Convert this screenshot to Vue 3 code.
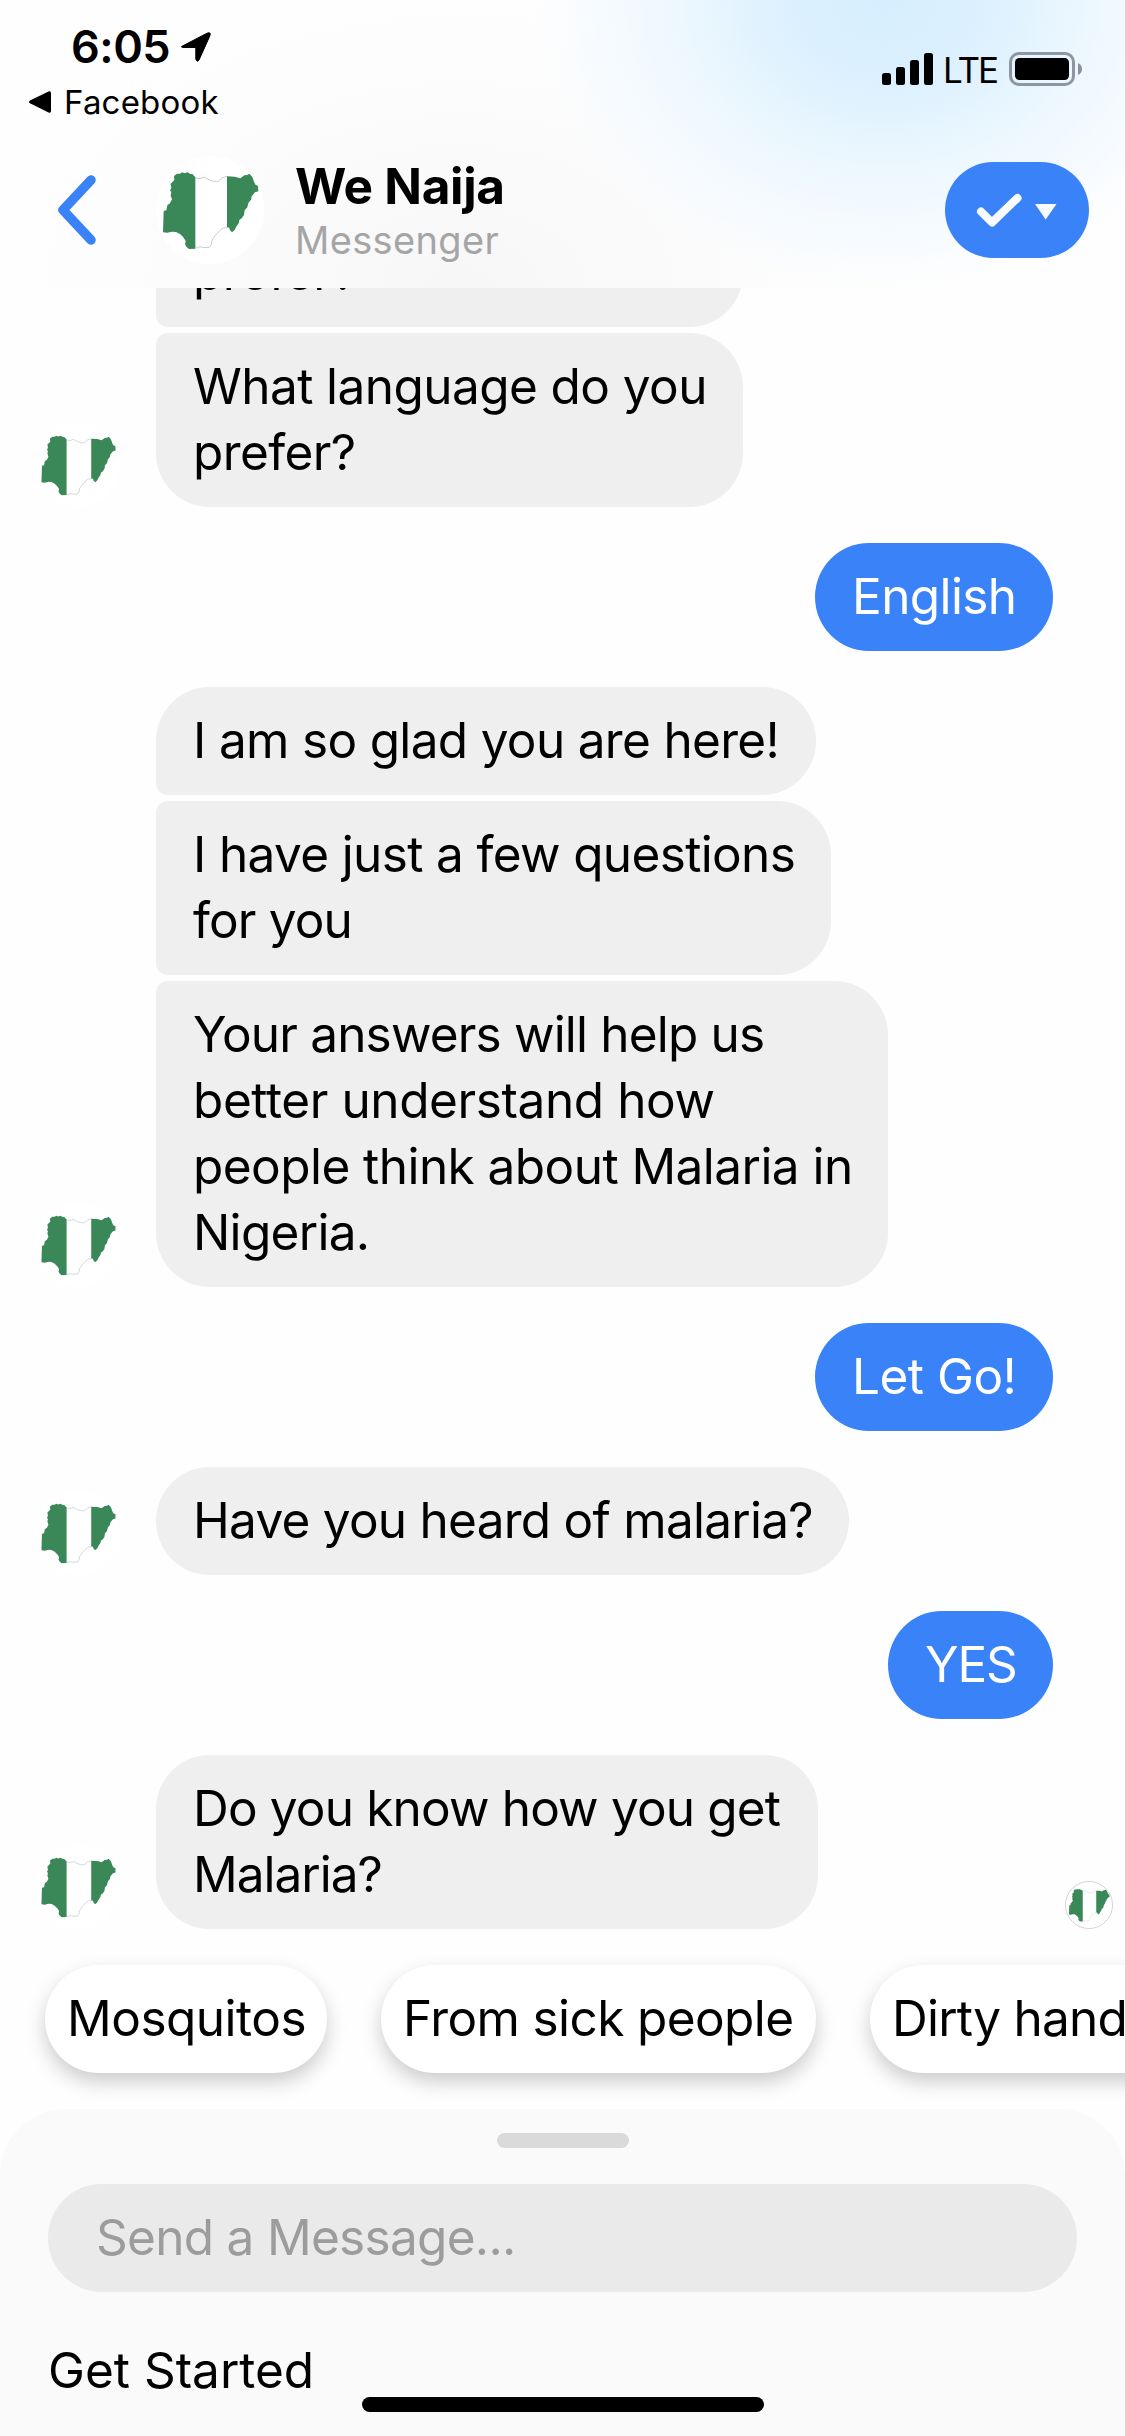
<script setup>
import { h } from 'vue'

const FlagMap = () =>
  h('svg', { viewBox: '48 48 324 324', width: '100%', height: '100%', style: 'display:block' }, [
    h('circle', { cx: 210, cy: 210, r: 162, fill: '#fff' }),
    h('path', {
      d: 'M166 112 Q175 120 192 111 Q208 122 220 124 L235 124 Q243 111 261 109 M166 319 L172 324 L180 320 L190 323 L208 322 Q217 314 216 301 Q226 282 240 272 L249 264 L261 263',
      fill: 'none', stroke: '#b9c6c1', 'stroke-width': 2.5
    }),
    h('path', {
      d: 'M166 326 L147 327 L139 320 L135 313 L137 303 L130 292 L120 282 L108 276 L96 275 L82 278 L69 277 L71 213 L79 211 L82 196 L90 190 L96 178 L92 167 L94 155 L90 152 L94 144 L92 131 L103 120 L102 108 L111 101 L120 101 L126 97 L134 100 L143 97 L151 102 L157 102 L166 112 Z M261 109 L284 110 L301 115 L313 106 L322 105 L328 101 L337 111 L342 125 L347 135 L354 137 L355 154 L345 157 L335 169 L333 179 L325 189 L322 202 L314 211 L312 225 L305 235 L298 240 L297 248 L288 261 L284 270 L276 277 L269 269 L268 263 L261 262 Z',
      fill: '#3a8758'
    })
  ])

const thread = [
  { from: 'bot', bubbles: [
    { lines: [['prefer?', -0.5]], width: 587, join: 'both' },
    { lines: [['What language do you', -0.57], ['prefer?', -0.6]], width: 587, join: 'top' }
  ] },
  { from: 'me', bubbles: [{ lines: [['English', -0.6]], width: 238 }] },
  { from: 'bot', bubbles: [
    { lines: [['I am so glad you are here!', -0.67]], width: 660, join: 'bottom' },
    { lines: [['I have just a few questions', -0.64], ['for you', -0.85]], width: 675, join: 'both' },
    { lines: [['Your answers will help us', -0.82], ['better understand how', -0.4], ['people think about Malaria in', -0.55], ['Nigeria.', -0.7]], width: 732, join: 'top' }
  ] },
  { from: 'me', bubbles: [{ lines: [['Let Go!', -0.5]], width: 238 }] },
  { from: 'bot', bubbles: [{ lines: [['Have you heard of malaria?', -0.74]], width: 693 }] },
  { from: 'me', bubbles: [{ lines: [['YES', -1.2]], width: 165 }] },
  { from: 'bot', seen: true, bubbles: [{ lines: [['Do you know how you get', -0.83], ['Malaria?', -1]], width: 662 }] }
]

const replies = [
  { label: 'Mosquitos', width: 282, track: -0.5 },
  { label: 'From sick people', width: 435, track: -0.6 },
  { label: 'Dirty hands', width: 330, track: -0.75 }
]
</script>

<template>
  <div class="screen">
    <header class="header">
      <div class="status">
        <div class="status-left">
          <div class="clock">
            <span class="time">6:05</span>
            <svg class="location" viewBox="0 0 30 30"><path d="M1.5 14 L26 1.2 Q30.5 -.5 28.8 4 L18 28 Q16 31 14.8 27 V15.500 H3 Q-1.500 15 1.500 14Z" stroke="#000" stroke-width="1" /></svg>
          </div>
          <div class="back-app">
            <svg class="tri" viewBox="0 0 22 22"><path d="M1 9.500 L20 .3 Q22 0 22 2 V20 Q22 22 20 21.700 L1 12.300 Q-1 11 1 9.500Z" /></svg>
            <span>Facebook</span>
          </div>
        </div>
        <div class="status-right">
          <svg class="signal" viewBox="0 0 51 32">
            <rect x="0" y="20" width="9" height="12" rx="2.500" />
            <rect x="14" y="14" width="9" height="18" rx="2.500" />
            <rect x="28" y="7" width="9" height="25" rx="2.500" />
            <rect x="42" y="0" width="9" height="32" rx="2.500" />
          </svg>
          <span class="lte">LTE</span>
          <svg class="battery" viewBox="0 0 73 34">
            <rect x="1.500" y="1.500" width="63" height="31" rx="8.500" fill="none" stroke="#8d96a2" stroke-width="3" />
            <rect x="6" y="6" width="54" height="22" rx="4.500" />
            <path d="M69 11 Q73 13 73 17 T69 23Z" fill="#8d8f9a" />
          </svg>
        </div>
      </div>
      <div class="nav">
        <svg class="chevron" viewBox="0 0 42 72"><path d="M36 6 L8 36 L36 66" /></svg>
        <div class="avatar-lg"><FlagMap /></div>
        <div class="title">
          <div class="name">We Naija</div>
          <div class="sub">Messenger</div>
        </div>
        <div class="action">
          <svg viewBox="0 0 144 96">
            <path d="M36 49.500 L47 60.500 L72.500 36" fill="none" stroke="#f8fcff" stroke-width="8" stroke-linecap="round" stroke-linejoin="round" />
            <path d="M90 42 H111.500 L100.700 57.500Z" fill="#f8fcff" />
          </svg>
        </div>
      </div>
    </header>

    <main class="chat">
      <section v-for="(group, g) in thread" :key="g" class="group" :class="group.from">
        <div v-if="group.from === 'bot'" class="avatar"><FlagMap /></div>
        <div class="bubbles">
          <div v-for="(b, i) in group.bubbles" :key="i" class="bubble" :class="b.join" :style="{ width: b.width + 'px' }">
            <div v-for="[text, track] in b.lines" :key="text" :style="{ letterSpacing: track + 'px' }">{{ text }}</div>
          </div>
        </div>
        <div v-if="group.seen" class="seen"><FlagMap /></div>
      </section>
      <div class="replies">
        <div v-for="r in replies" :key="r.label" class="reply" :style="{ width: r.width + 'px', letterSpacing: r.track + 'px' }">{{ r.label }}</div>
      </div>
    </main>

    <footer class="sheet">
      <div class="grabber"></div>
      <div class="field">Send a Message...</div>
      <div class="started">Get Started</div>
      <div class="home"></div>
    </footer>
  </div>
</template>

<style>
body { margin: 0; background: #fff; }
</style>

<style scoped>
.screen {
  width: 1125px;
  height: 2436px;
  display: flex;
  flex-direction: column;
  overflow: hidden;
  background: #fefefe;
  color: #000;
  font-family: Inter, "Liberation Sans", sans-serif;
  font-size: 49.5px;
  line-height: 66px;
  white-space: nowrap;
}
.header {
  flex: none;
  height: 288px;
  background:
    radial-gradient(ellipse 350px 290px at 885px 0, #d6eefe 0%, #dcf0fe 28%, #ebf7fe 56%, #f5faff 78%, rgba(252, 253, 255, 0) 100%),
    radial-gradient(ellipse 440px 290px at 460px 288px, #f7f7f7 0%, #fbfbfb 55%, #fefefe 100%);
}
.status { display: flex; justify-content: space-between; height: 144px; }
.status-left { padding-left: 29px; }
.clock { display: flex; align-items: flex-start; padding: 20px 0 0 42px; height: 52px; }
.time { font-size: 45px; font-weight: 600; line-height: 54px; width: 110px; letter-spacing: -0.5px; }
.location { width: 30px; height: 30px; margin-top: 12px; }
.back-app { display: flex; align-items: center; gap: 13px; height: 60px; font-size: 33px; line-height: 60px; letter-spacing: 0.2px; }
.tri { width: 22px; height: 22px; }
.status-right { display: flex; align-items: flex-start; padding: 52px 43px 0 0; }
.signal { width: 51px; height: 32px; margin-top: 1px; }
.lte { font-size: 35px; line-height: 36px; width: 66px; margin-left: 10px; letter-spacing: -2px; }
.battery { width: 73px; height: 34px; }
.nav { display: flex; align-items: center; height: 132px; padding: 0 36px 0 55px; }
.chevron { width: 42px; height: 72px; fill: none; stroke: #3a82f7; stroke-width: 9.5; stroke-linecap: round; stroke-linejoin: round; }
.avatar-lg { width: 108px; height: 108px; margin-left: 59px; }
.title { margin-left: 31px; flex: 1; }
.name { font-weight: 700; font-size: 49.5px; line-height: 60px; letter-spacing: -0.3px; }
.sub { font-size: 38px; line-height: 48px; letter-spacing: 0.35px; color: #a5a5a5; }
.action { width: 144px; height: 96px; border-radius: 48px; background: #3a82f7; }
.action svg { display: block; width: 144px; height: 96px; }

.chat { flex: none; box-sizing: border-box; height: 1821px; overflow: hidden; display: flex; flex-direction: column; justify-content: flex-end; gap: 36px; padding-bottom: 36px; }
.group { flex: none; display: flex; align-items: flex-end; padding-left: 36px; }
.group.me { justify-content: flex-end; padding-right: 72px; }
.avatar { width: 84px; height: 84px; margin-right: 36px; flex: none; }
.bubbles { display: flex; flex-direction: column; gap: 6px; }
.bubble { box-sizing: border-box; padding: 19.5px 0 22.5px 37px; border-radius: 54px; background: #efefef; }
.me .bubble { background: #3a82f7; color: #fff; }
.bubble.top, .bubble.both { border-top-left-radius: 12px; }
.bubble.bottom, .bubble.both { border-bottom-left-radius: 12px; }
.seen { box-sizing: border-box; width: 48px; height: 48px; margin: 0 12px 0 auto; border: 1px solid #d2d2d8; border-radius: 50%; overflow: hidden; }
.replies { flex: none; display: flex; gap: 54px; padding-left: 45px; }
.reply { flex: none; box-sizing: border-box; height: 108px; padding: 19.5px 0 0 22px; border-radius: 54px; background: #fff; box-shadow: 0 9px 20px rgba(0, 0, 0, 0.2); }

.sheet { flex: none; box-sizing: border-box; height: 327px; padding: 24px 48px 0; border-radius: 66px 66px 0 0; background: #fafafa; }
.grabber { width: 132px; height: 15px; margin: 0 auto; border-radius: 8px; background: #dadada; }
.field { box-sizing: border-box; height: 108px; margin-top: 36px; padding: 20px 0 0 48px; border-radius: 54px; background: #eaeaea; color: #9c9c9c; letter-spacing: -0.7px; }
.started { margin-top: 45px; height: 60px; line-height: 66px; }
.home { width: 402px; height: 15px; margin: 0 auto; border-radius: 8px; background: #000; }
</style>
